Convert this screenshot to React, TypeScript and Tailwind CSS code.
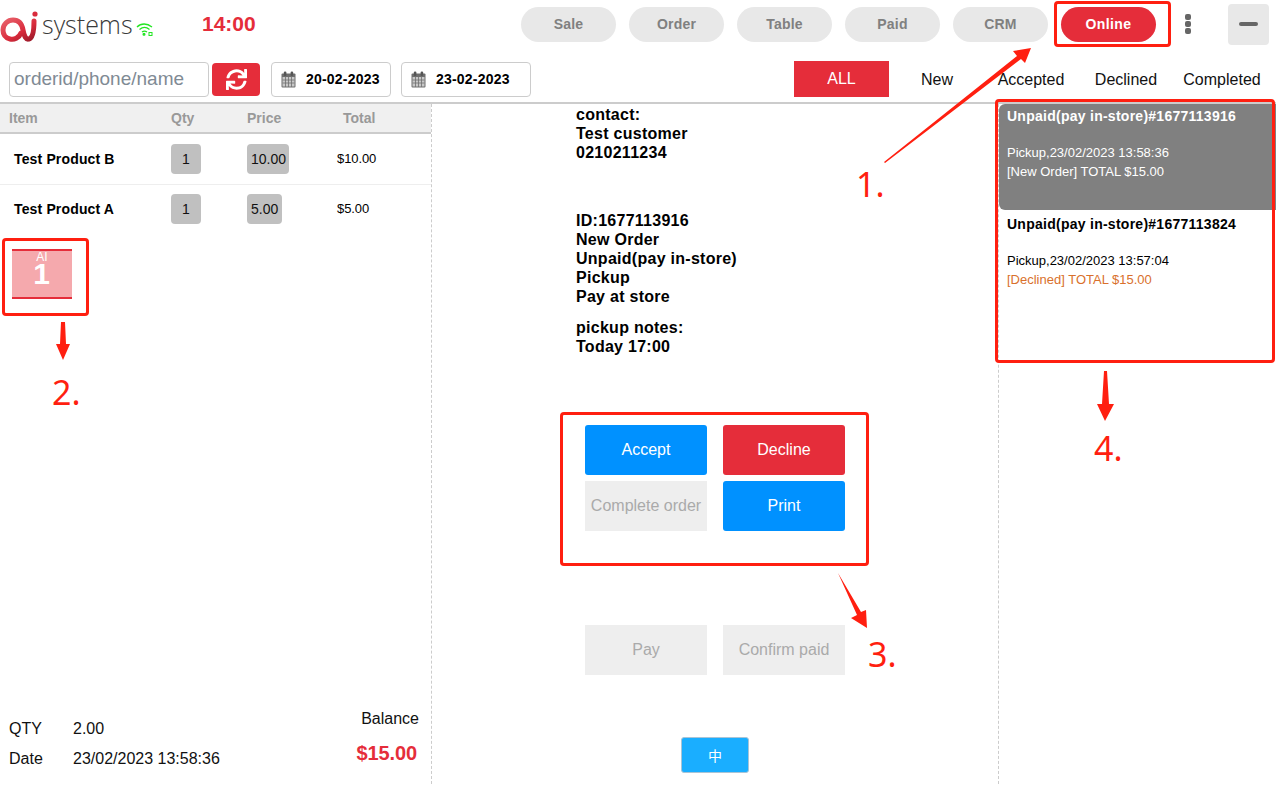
import React from 'react';
import { FaSync } from 'react-icons/fa';

const pills = ['Sale', 'Order', 'Table', 'Paid', 'CRM'];
const tabs = [
  { label: 'New', cls: 'w-[96px]' },
  { label: 'Accepted', cls: 'w-[92px]' },
  { label: 'Declined', cls: 'w-[98px]' },
  { label: 'Completed', cls: 'w-[94px]' },
];

const Logo = () => (
  <svg width="40" height="40" viewBox="0 0 40 40" className="shrink-0">
    <defs>
      <linearGradient id="logoRed" x1="0" y1="0" x2="1" y2="1">
        <stop offset="0" stopColor="#e8606a" />
        <stop offset="0.6" stopColor="#d92b3c" />
        <stop offset="1" stopColor="#9c1a2a" />
      </linearGradient>
    </defs>
    <path d="M21 29 C19 34 14 36 10 35 C5 34 3 30 3 26 C3 20 8 16 13 16 C19 16 22 20 23 26 C24 32 26 36 29 35 C33 34 34 26 34 17" fill="none" stroke="url(#logoRed)" strokeWidth="5" strokeLinecap="round" />
    <circle cx="35" cy="10" r="2.6" fill="#d92b3c" />
  </svg>
);

const Wifi = () => (
  <svg width="17" height="14" viewBox="0 0 17 14" fill="none" stroke="#22e622" strokeWidth="1.3" className="shrink-0">
    <path d="M1 5 C5 1 11 1 16 5" />
    <path d="M3.5 7.5 C6.5 5 10.5 5 13.5 7.5" />
    <path d="M6 10 C7.5 9 9.5 9 11 10" />
    <circle cx="8" cy="12.3" r="0.9" fill="#22e622" />
    <rect x="13" y="10.5" width="3" height="3" strokeWidth="1" />
  </svg>
);

const Calendar = () => (
  <svg width="15" height="17" viewBox="0 0 15 17" className="shrink-0">
    <rect x="0.5" y="2.5" width="14" height="14" rx="1" fill="#6e6e6e" />
    <rect x="1.5" y="6" width="12" height="9.5" fill="#c8c8c8" />
    <rect x="2.8" y="0.5" width="2.6" height="4.5" rx="1.2" fill="#555" />
    <rect x="9.6" y="0.5" width="2.6" height="4.5" rx="1.2" fill="#555" />
    <path d="M1.5 9h12M1.5 12h12M4.5 6v10M7.5 6v10M10.5 6v10" stroke="#6e6e6e" strokeWidth="0.8" />
  </svg>
);

const DateBox = ({ value, cls }: { value: string; cls: string }) => (
  <div className={`h-[35px] shrink-0 border border-[#ccc] rounded flex items-center pl-[9px] gap-[10px] ${cls}`}>
    <Calendar />
    <span className="text-[14px] font-bold text-black tracking-[0.2px]">{value}</span>
  </div>
);

const ProductRow = ({ name, price, priceCls, total, rowCls }: { name: string; price: string; priceCls: string; total: string; rowCls: string }) => (
  <div className={`flex items-center ${rowCls}`}>
    <div className="w-[171px] pl-[14px] text-[14px] font-bold text-black tracking-[0.15px]">{name}</div>
    <div className="w-[76px]">
      <div className="w-[30px] h-[30px] bg-[#c0c0c0] rounded text-[14px] text-[#111] flex items-center justify-center">1</div>
    </div>
    <div className="w-[90px]">
      <div className={`h-[30px] bg-[#c0c0c0] rounded text-[14px] text-[#111] flex items-center pl-[4px] ${priceCls}`}>{price}</div>
    </div>
    <div className="text-[13px] text-black -tracking-[0.1px]">{total}</div>
  </div>
);

const OrderBtn = ({ label, cls }: { label: string; cls: string }) => (
  <div className={`w-[122px] h-[50px] flex items-center justify-center text-[16px] ${cls}`}>{label}</div>
);

export default function App() {
  return (
    <div className="relative w-[1276px] h-[786px] overflow-hidden bg-white font-['Liberation_Sans',sans-serif]">
      {/* Top bar */}
      <div className="h-[48px] flex items-center">
        <div className="w-[202px] shrink-0 flex items-center h-full">
          <Logo />
          <span className="font-['Open_Sans',sans-serif] font-light text-[25px] leading-none text-[#3a3a3a] ml-[2px] mt-[1px]">systems</span>
          <span className="mt-[10px] ml-[3px]"><Wifi /></span>
        </div>
        <div className="w-[319px] shrink-0 text-[21px] font-bold text-[#e52d3a]">14:00</div>
        <div className="flex gap-[13px] items-center">
          {pills.map((p) => (
            <div key={p} className="w-[95px] h-[35px] rounded-full bg-[#e8e8e8] text-[#808080] text-[14px] font-bold tracking-[0.2px] flex items-center justify-center">{p}</div>
          ))}
          <div className="w-[95px] h-[35px] rounded-full bg-[#e52d3a] text-white text-[14px] font-bold tracking-[0.4px] flex items-center justify-center">Online</div>
        </div>
        <div className="w-[6px] ml-[29px] flex flex-col gap-[1px]">
          <span className="w-[6px] h-[6px] rounded-[2px] bg-[#666]" />
          <span className="w-[6px] h-[6px] rounded-[2px] bg-[#666]" />
          <span className="w-[6px] h-[6px] rounded-[2px] bg-[#666]" />
        </div>
        <div className="ml-[37px] w-[41px] h-[41px] bg-[#e8e8e8] rounded flex items-center justify-center">
          <span className="w-[19px] h-[4px] rounded-sm bg-[#666]" />
        </div>
      </div>

      {/* Search and filters */}
      <div className="h-[56px] border-b-[2px] border-[#ccc] flex items-center pb-[2px] pt-[10px] pl-[9px]">
        <div className="w-[200px] h-[35px] shrink-0 border border-[#ccc] rounded flex items-center pl-[4px] text-[19px] text-[#808a94]">orderid/phone/name</div>
        <div className="ml-[3px] w-[48px] h-[33px] shrink-0 bg-[#e52d3a] rounded-sm flex items-center justify-center text-white">
          <FaSync size={21} />
        </div>
        <DateBox value="20-02-2023" cls="ml-[11px] w-[120px]" />
        <DateBox value="23-02-2023" cls="ml-[10px] w-[130px]" />
        <div className="ml-[263px] w-[95px] h-[36px] shrink-0 bg-[#e52d3a] text-white text-[16px] flex items-center justify-center">ALL</div>
        {tabs.map((t) => (
          <div key={t.label} className={`${t.cls} shrink-0 pt-[1px] text-center text-[16px] text-[#111]`}>{t.label}</div>
        ))}
      </div>

      {/* Columns */}
      <div className="h-[680px] flex">
        <div className="w-[432px] border-r border-dashed border-[#ccc] flex flex-col">
          <div className="h-[30px] bg-[#f0f0f0] border-b-[2px] border-[#ccc] flex items-center pt-[1px] text-[14px] font-bold text-[#999]">
            <div className="w-[171px] pl-[9px]">Item</div>
            <div className="w-[76px]">Qty</div>
            <div className="w-[96px]">Price</div>
            <div>Total</div>
          </div>
          <ProductRow name="Test Product B" price="10.00" priceCls="w-[42px]" total="$10.00" rowCls="h-[51px] border-b border-[#eee]" />
          <ProductRow name="Test Product A" price="5.00" priceCls="w-[35px]" total="$5.00" rowCls="h-[48px]" />
          <div className="mt-[16px] ml-[12px] w-[60px] h-[50px] bg-[#f5a9ad] border-y-[2px] border-[#e52d3a] text-white text-center flex flex-col items-center">
            <span className="text-[12px] leading-[13px]">AI</span>
            <span className="text-[30px] font-bold leading-[20px] -ml-[1px]">1</span>
          </div>
          <div className="mt-auto mb-[13px] pl-[9px] pr-[12px] flex justify-between">
            <div className="text-[16px] text-[#111] flex flex-col gap-[6px] pt-[10px]">
              <div className="flex"><span className="w-[64px]">QTY</span><span>2.00</span></div>
              <div className="flex"><span className="w-[64px]">Date</span><span>23/02/2023 13:58:36</span></div>
            </div>
            <div className="flex flex-col items-end text-right">
              <span className="text-[16px] text-[#111]">Balance</span>
              <span className="text-[20px] font-bold text-[#e52d3a] mt-[7px] mr-[2px] -tracking-[0.1px]">$15.00</span>
            </div>
          </div>
        </div>

        <div className="w-[567px] border-r border-dashed border-[#ccc] flex flex-col pl-[153px]">
          <div className="ml-[-9px] text-[16px] font-bold text-black leading-[19px] pt-[1px] tracking-[0.27px]">
            <div>contact:</div>
            <div>Test customer</div>
            <div>0210211234</div>
            <div className="mt-[49px]">ID:1677113916</div>
            <div>New Order</div>
            <div>Unpaid(pay in-store)</div>
            <div>Pickup</div>
            <div>Pay at store</div>
            <div className="mt-[12px]">pickup notes:</div>
            <div>Today 17:00</div>
          </div>
          <div className="mt-[69px] grid grid-cols-[122px_122px] gap-x-[16px] gap-y-[6px] w-[260px]">
            <OrderBtn label="Accept" cls="bg-[#0091ff] text-white rounded-[3px]" />
            <OrderBtn label="Decline" cls="bg-[#e52d3a] text-white rounded-[3px]" />
            <OrderBtn label="Complete order" cls="bg-[#eeeeee] text-[#aaa]" />
            <OrderBtn label="Print" cls="bg-[#0091ff] text-white rounded-[3px]" />
          </div>
          <div className="mt-[94px] flex gap-[16px]">
            <OrderBtn label="Pay" cls="bg-[#eeeeee] text-[#aaa]" />
            <OrderBtn label="Confirm paid" cls="bg-[#eeeeee] text-[#aaa]" />
          </div>
          <div className="mt-[62px] ml-[96px] w-[68px] h-[36px] bg-[#1aaeff] border border-[#a9c4d6] rounded-[3px] text-white text-[14px] flex items-center justify-center font-['Noto_Sans_CJK_SC',sans-serif]">中</div>
        </div>

        <div className="flex-1">
          <div className="h-[106px] bg-[#808080] rounded-l-md text-white text-[14px] pl-[8px] pt-[3px] leading-[19px]">
            <div className="font-bold tracking-[0.26px]">Unpaid(pay in-store)#1677113916</div>
            <div className="text-[13px] mt-[17px]">Pickup,23/02/2023 13:58:36</div>
            <div className="text-[13px]">[New Order] TOTAL $15.00</div>
          </div>
          <div className="text-[14px] text-black pl-[8px] pt-[5px] leading-[19px]">
            <div className="font-bold tracking-[0.26px]">Unpaid(pay in-store)#1677113824</div>
            <div className="text-[13px] mt-[17px]">Pickup,23/02/2023 13:57:04</div>
            <div className="text-[13px] text-[#d9702c]">[Declined] TOTAL $15.00</div>
          </div>
        </div>
      </div>

      {/* Annotation overlay: boxes, arrows and numbers */}
      <div className="absolute left-[1054px] top-[1px] w-[117px] h-[46px] border-[3px] border-[#ff1f10] rounded-sm" />
      <div className="absolute left-[2px] top-[238px] w-[87px] h-[78px] border-[3px] border-[#ff1f10] rounded-sm" />
      <div className="absolute left-[560px] top-[412px] w-[309px] h-[154px] border-[3px] border-[#ff1f10] rounded-sm" />
      <div className="absolute left-[995px] top-[99px] w-[280px] h-[264px] border-[3px] border-[#ff1f10] rounded-sm" />
      <svg className="absolute left-0 top-0 pointer-events-none" width="1276" height="786" fill="#ff1f10">
        <polygon points="884,162 1017,56 1013,51 1031,48 1025,63 1021,59 885,163" />
        <polygon points="61,322 65,322 66,344 70,344 63,360 56,344 60,344" />
        <polygon points="838,573 861,612 866,610 867,628 851,618 857,615" />
        <polygon points="1104,371 1107,371 1109,404 1114,404 1105,421 1097,404 1102,404" />
      </svg>
      <span className="absolute left-[856px] top-[162px] text-[34px] leading-[44px] text-[#ff1f10] font-['Noto_Sans',sans-serif]">1.</span>
      <span className="absolute left-[52px] top-[370px] text-[34px] leading-[44px] text-[#ff1f10] font-['Noto_Sans',sans-serif]">2.</span>
      <span className="absolute left-[868px] top-[632px] text-[34px] leading-[44px] text-[#ff1f10] font-['Noto_Sans',sans-serif]">3.</span>
      <span className="absolute left-[1094px] top-[426px] text-[34px] leading-[44px] text-[#ff1f10] font-['Noto_Sans',sans-serif]">4.</span>
    </div>
  );
}
